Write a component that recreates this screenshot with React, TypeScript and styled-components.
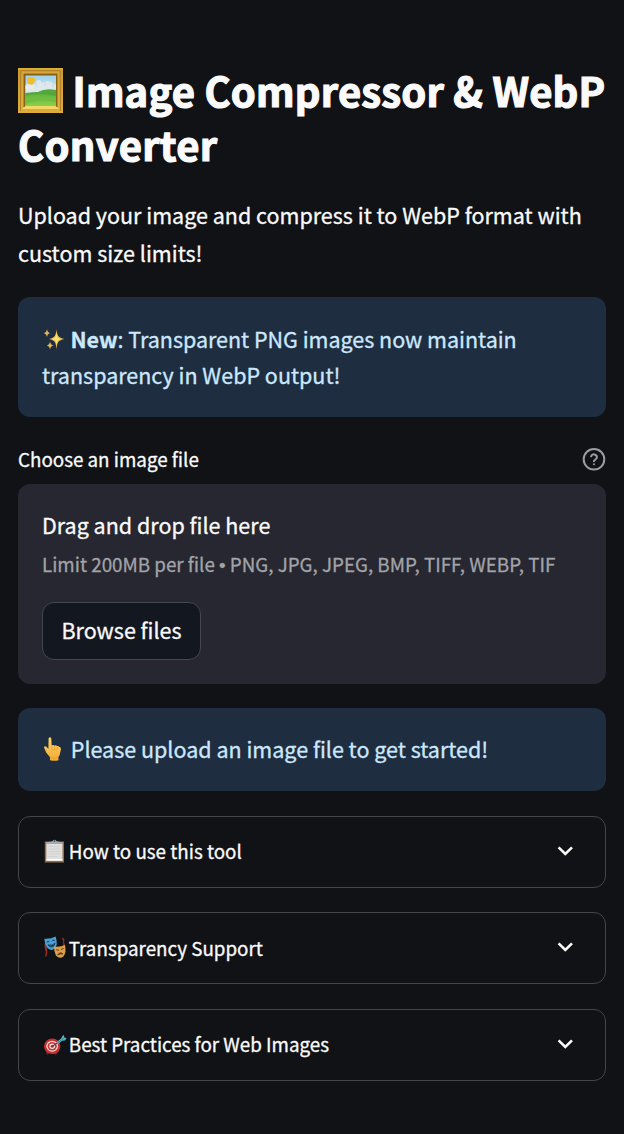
import React from "react";
import styled, { createGlobalStyle } from "styled-components";

const GlobalStyle = createGlobalStyle`
  *, *::before, *::after { box-sizing: border-box; }
  html, body { margin: 0; background: #101216; }
  body {
    color: #fafafa;
    font-family: "Noto Sans CJK SC", "Source Sans Pro", "Noto Sans", sans-serif;
    font-size: 21.5px;
    -webkit-font-smoothing: antialiased;
    -webkit-text-stroke: 0.3px currentColor;
  }
  h1, p { margin: 0; }
`;

const Page = styled.main`
  width: 624px;
  height: 1134px;
  padding: 63px 18px 0;
  overflow: hidden;
  background: #101216;
`;

const Line = styled.span<{ $spacing?: number }>`
  display: flex;
  align-items: center;
  white-space: pre;
  letter-spacing: ${(p) => p.$spacing ?? 0}px;
`;

const Title = styled.h1`
  font-size: 40px;
  font-weight: 700;
  line-height: 54px;
  margin-bottom: 25px;
  -webkit-text-stroke: 1.2px currentColor;
`;

const Intro = styled.p`
  line-height: 38px;
  margin-bottom: 25px;
`;

const Alert = styled.section`
  padding: 24px;
  border-radius: 12px;
  background: #1f2d41;
  color: #cbe8fd;
  line-height: 36px;
`;

const LastAlert = styled(Alert)`
  padding: 23px 24px 24.5px;
`;

const LabelRow = styled.div`
  display: flex;
  align-items: center;
  justify-content: space-between;
  height: 36px;
  margin: 23px 0 7.5px;
  font-size: 18.8px;
`;

const Uploader = styled.section`
  height: 200px;
  margin-bottom: 24px;
  padding: 22.5px 24px;
  border-radius: 12px;
  background: #262730;
`;

const DropTitle = styled.div`
  line-height: 38px;
`;

const Limits = styled.div`
  color: #a2a3a8;
  font-size: 18.8px;
  line-height: 40px;
  margin-bottom: 16px;
`;

const Bullet = styled.span`
  font-family: "Liberation Sans", sans-serif;
`;

const BrowseButton = styled.button`
  display: flex;
  align-items: center;
  justify-content: center;
  width: 159px;
  height: 58px;
  padding: 0 0 3px;
  border: 1.5px solid #454750;
  border-radius: 12px;
  background: #131720;
  color: #fafafa;
  font: inherit;
  -webkit-text-stroke: inherit;
`;

const Expanders = styled.div`
  display: grid;
  gap: 24.7px;
  margin-top: 24.5px;
`;

const Expander = styled.div`
  display: flex;
  align-items: center;
  justify-content: space-between;
  height: 72px;
  padding: 0 30px 1.8px 25px;
  border: 1.5px solid #43454b;
  border-radius: 12px;
  font-size: 18.8px;
`;

const Glyph = styled.svg<{ $w: number; $h: number; $gap?: number; $shift?: number }>`
  display: block;
  flex: none;
  width: ${(p) => p.$w}px;
  height: ${(p) => p.$h}px;
  margin-right: ${(p) => p.$gap ?? 0}px;
  transform: translateY(${(p) => p.$shift ?? 0}px);
`;

const PictureIcon = () => (
  <Glyph $w={45} $h={45} $gap={9.5} viewBox="0 0 45 45" aria-hidden>
    <defs>
      <linearGradient id="sky" x1="0" y1="0" x2="0" y2="1">
        <stop offset="0" stopColor="#9fd3ea" />
        <stop offset="1" stopColor="#e3eff2" />
      </linearGradient>
      <linearGradient id="grass" x1="0" y1="0" x2="0" y2="1">
        <stop offset="0" stopColor="#5fb43d" />
        <stop offset="1" stopColor="#8bd04c" />
      </linearGradient>
      <linearGradient id="gold" x1="0" y1="0" x2="0" y2="1">
        <stop offset="0" stopColor="#c99a2e" />
        <stop offset="1" stopColor="#dfad39" />
      </linearGradient>
    </defs>
    <rect width="45" height="45" rx="0.6" fill="url(#gold)" />
    <path d="M0 .8H45" stroke="#e3b83f" strokeWidth="1.2" />
    <path d="M2.5 43V2.5H42.5V43" fill="none" stroke="#b5832a" strokeWidth="1" />
    <path d="M4.5 4.5H40.5V40.5H4.5Z" fill="#ddb347" />
    <path d="M5.5 5.5H39.5V39H37V8H8V39H5.5Z" fill="#8a5f16" />
    <path d="M4 41L8 37.5H37L41 41Z" fill="#f5d866" />
    <rect x="7.5" y="7.5" width="30.5" height="30.5" fill="url(#sky)" />
    <path d="M7.5 18C10 14 15 15 17 16C18 11 23 11 24 15C28 12 34 13 38 17V25H7.5Z" fill="#dde8ec" />
    <path d="M18 12V18M27 11V18M35 13V19" stroke="#c1d4de" strokeWidth=".8" />
    <path d="M9 10.5Q13 7.5 16.8 10.2Q17.5 15 13 17.5Q9 17 9 10.5Z" fill="#f1bd2f" />
    <path d="M7.5 17.5Q11 15 16 18L15 21H7.5Z" fill="#e4ecee" />
    <path d="M7.5 25Q15 24 20 24Q27 20 38 22V38H7.5Z" fill="#52a83a" />
    <path d="M7.5 28Q17 24 38 28V38H7.5Z" fill="url(#grass)" />
    <path d="M7.5 33Q20 27 38 32V34Q22 30 7.5 36Z" fill="#70bd3f" />
  </Glyph>
);

const SparklesIcon = () => (
  <Glyph $w={24} $h={24} $gap={4.5} $shift={0.8} viewBox="0 0 24 24" aria-hidden>
    <path d="M14.5 1.5C15.2 8 16 9.8 22.5 11.2C16 12.6 15.2 14.5 14.5 21.5C13.8 14.5 13 12.6 7 11.2C13 9.8 13.8 8 14.5 1.5Z" fill="#e9bf50" />
    <path d="M14.5 5L15.6 10L19 11.2L15.6 12.4L14.5 17L13.4 12.4L10 11.2L13.4 10Z" fill="#ffe171" />
    <path d="M5 1.3Q5.4 4.8 8 5.4Q5.4 6 5 9.3Q4.5 6 2 5.4Q4.5 4.8 5 1.3Z" fill="#e0b151" />
    <path d="M8 13.8Q8.5 17.2 11.5 17.8Q8.5 18.4 8 21.8Q7.5 18.4 4.8 17.8Q7.5 17.2 8 13.8Z" fill="#e4b551" />
  </Glyph>
);

const PointingIcon = () => (
  <Glyph $w={24} $h={26} $gap={4.8} viewBox="0 0 24 26" aria-hidden>
    <defs>
      <linearGradient id="skin" x1="0" y1="0" x2="0" y2="1">
        <stop offset="0" stopColor="#ffd466" />
        <stop offset="1" stopColor="#f0aa34" />
      </linearGradient>
    </defs>
    <path d="M6.6 2.2Q8 .4 9.3 2.4L9.7 9.6Q11.2 8.6 12.6 9.7Q14 8.9 15 10Q16.8 9.6 17.3 11Q19.4 11.2 18.8 14L17.6 19.3L16.4 21V24.2Q13 25.4 8 24.2V21.2L4.3 16.7L2 11.6Q2.1 9.6 4.1 10.6L6.4 12.8Z" fill="url(#skin)" />
    <path d="M9.8 10.5V13.6Q11.2 15 12.6 13.3V10.5M12.6 13.3Q14.2 15.2 15.2 13.3V10.8M8 21.6Q13 22.8 16.4 21.2" fill="none" stroke="#dd962c" strokeWidth=".6" />
  </Glyph>
);

const ClipboardIcon = () => (
  <Glyph $w={21} $h={24} $gap={3.8} viewBox="0 0 21 24" aria-hidden>
    <path d="M.8 2.5H20V23.5H.8Z" fill="#8f7145" />
    <path d="M2.3 4H18.5V21.5H2.3Z" fill="#dededd" />
    <path d="M2.3 20H18.5V21.7H2.3Z" fill="#fff" />
    <path d="M4.5 7.5H16M4.5 10H16M4.5 12.5H16M4.5 15H16M4.5 17.5H13" stroke="#cfcfcf" strokeWidth=".8" />
    <path d="M2 5V3.2L8 2.4Q10.5-1 13 2.4L18.7 3.2V5Z" fill="#a5a9b2" />
    <circle cx="10.5" cy="2" r=".9" fill="#55585e" />
  </Glyph>
);

const MasksIcon = () => (
  <Glyph $w={24} $h={24} $gap={0.8} $shift={0.5} viewBox="0 0 24 24" aria-hidden>
    <path d="M1.4 6Q-.2 10 1.2 14Q2.5 18 .6 21.5L2.6 20.5Q3.8 16 2.8 12" fill="#9e2b20" />
    <path d="M17.8 2Q21.5 2.6 20 7Q22.8 12 20 15L18.7 12Q20 6 17.8 2Z" fill="#992b20" />
    <path d="M.3 3.2Q6 4 11.6 1Q14.2 9 11 13Q7 16 3.4 12.6Q.6 9 .3 3.2Z" fill="#4c9fd6" />
    <path d="M2.7 6.7Q4 5.2 5.4 6.4M8 5.4Q9.5 4 10.8 5M3.9 9.3Q8 10.6 11.2 7.7Q10.2 11.6 7.2 11.6Q5 11.4 3.9 9.3Z" fill="#174665" stroke="#174665" strokeWidth=".8" />
    <path d="M10.2 11Q16 12 20.8 9.6Q22.8 17 19.4 21Q15.8 24 12 20.3Q9.8 16 10.2 11Z" fill="#dca04a" />
    <path d="M12.3 14.2L15 14.8M17 14L19.7 12.9M13.6 19.5Q16 15.8 18.8 18.5Q16 17.9 13.6 19.5Z" fill="#633b1b" stroke="#633b1b" strokeWidth="1" />
  </Glyph>
);

const TargetIcon = () => (
  <Glyph $w={24} $h={24} $gap={0.8} $shift={1.3} viewBox="0 0 24 24" aria-hidden>
    <path d="M1 16L3 21.5L6 19.5L12 21.5L13 20L16 17Z" fill="#7d2927" />
    <ellipse cx="8.2" cy="12.9" rx="8.2" ry="7.8" fill="#c92f32" />
    <ellipse cx="8.2" cy="12.9" rx="5.9" ry="5.5" fill="#f0dfda" />
    <ellipse cx="8.2" cy="12.9" rx="4.6" ry="4.2" fill="#cf3034" />
    <ellipse cx="8.2" cy="12.9" rx="2.9" ry="2.7" fill="#f2e2de" />
    <circle cx="8.2" cy="12.9" r="1.5" fill="#b62c2e" />
    <path d="M8.2 12.9L16 8" stroke="#574241" strokeWidth="1.2" />
    <path d="M12.5 9L17.3 5L18.4 2.6L20 1.8L20.2 4.2L22.5 4.8L21 7.2L18.2 7.5L13.8 11Z" fill="#57b2c6" />
    <path d="M13.5 9.8L20 4.6" stroke="#27788f" strokeWidth=".7" />
  </Glyph>
);

const HelpIcon = () => (
  <Glyph $w={24} $h={24} $shift={1.3} viewBox="0 0 24 24" fill="none" stroke="#9c9da2" strokeWidth="2" strokeLinecap="round" strokeLinejoin="round" aria-label="Help">
    <circle cx="12" cy="12" r="10.3" />
    <path d="M9.1 9a3 3 0 0 1 5.8 1c0 2-3 2.6-3 4" />
    <path d="M12 17h.01" />
  </Glyph>
);

const Chevron = () => (
  <Glyph $w={20} $h={20} $shift={-0.3} viewBox="0 0 20 20" fill="none" stroke="#fafafa" strokeWidth="2.6" aria-hidden>
    <path d="M3.6 6.7L10.3 13.2L17 6.7" />
  </Glyph>
);

const sections = [
  { label: "How to use this tool", Icon: ClipboardIcon },
  { label: "Transparency Support", Icon: MasksIcon },
  { label: "Best Practices for Web Images", Icon: TargetIcon },
];

export default function App() {
  return (
    <>
      <GlobalStyle />
      <Page>
        <Title>
          <Line $spacing={0.18}><PictureIcon /><span>Image Compressor &amp; WebP</span></Line>
          <Line $spacing={0.25}>Converter</Line>
        </Title>
        <Intro>
          <Line>Upload your image and compress it to WebP format with</Line>
          <Line>custom size limits!</Line>
        </Intro>
        <Alert>
          <Line $spacing={-0.02}><SparklesIcon /><span><strong>New</strong>: Transparent PNG images now maintain</span></Line>
          <Line>transparency in WebP output!</Line>
        </Alert>
        <LabelRow><Line>Choose an image file</Line><HelpIcon /></LabelRow>
        <Uploader>
          <DropTitle><Line>Drag and drop file here</Line></DropTitle>
          <Limits><Line><span>Limit 200MB per file <Bullet>•</Bullet> PNG, JPG, JPEG, BMP, TIFF, WEBP, TIF</span></Line></Limits>
          <BrowseButton><Line>Browse files</Line></BrowseButton>
        </Uploader>
        <LastAlert><Line><PointingIcon /><span>Please upload an image file to get started!</span></Line></LastAlert>
        <Expanders>
          {sections.map(({ label, Icon }) => (
            <Expander key={label}>
              <Line><Icon /><span>{label}</span></Line>
              <Chevron />
            </Expander>
          ))}
        </Expanders>
      </Page>
    </>
  );
}
